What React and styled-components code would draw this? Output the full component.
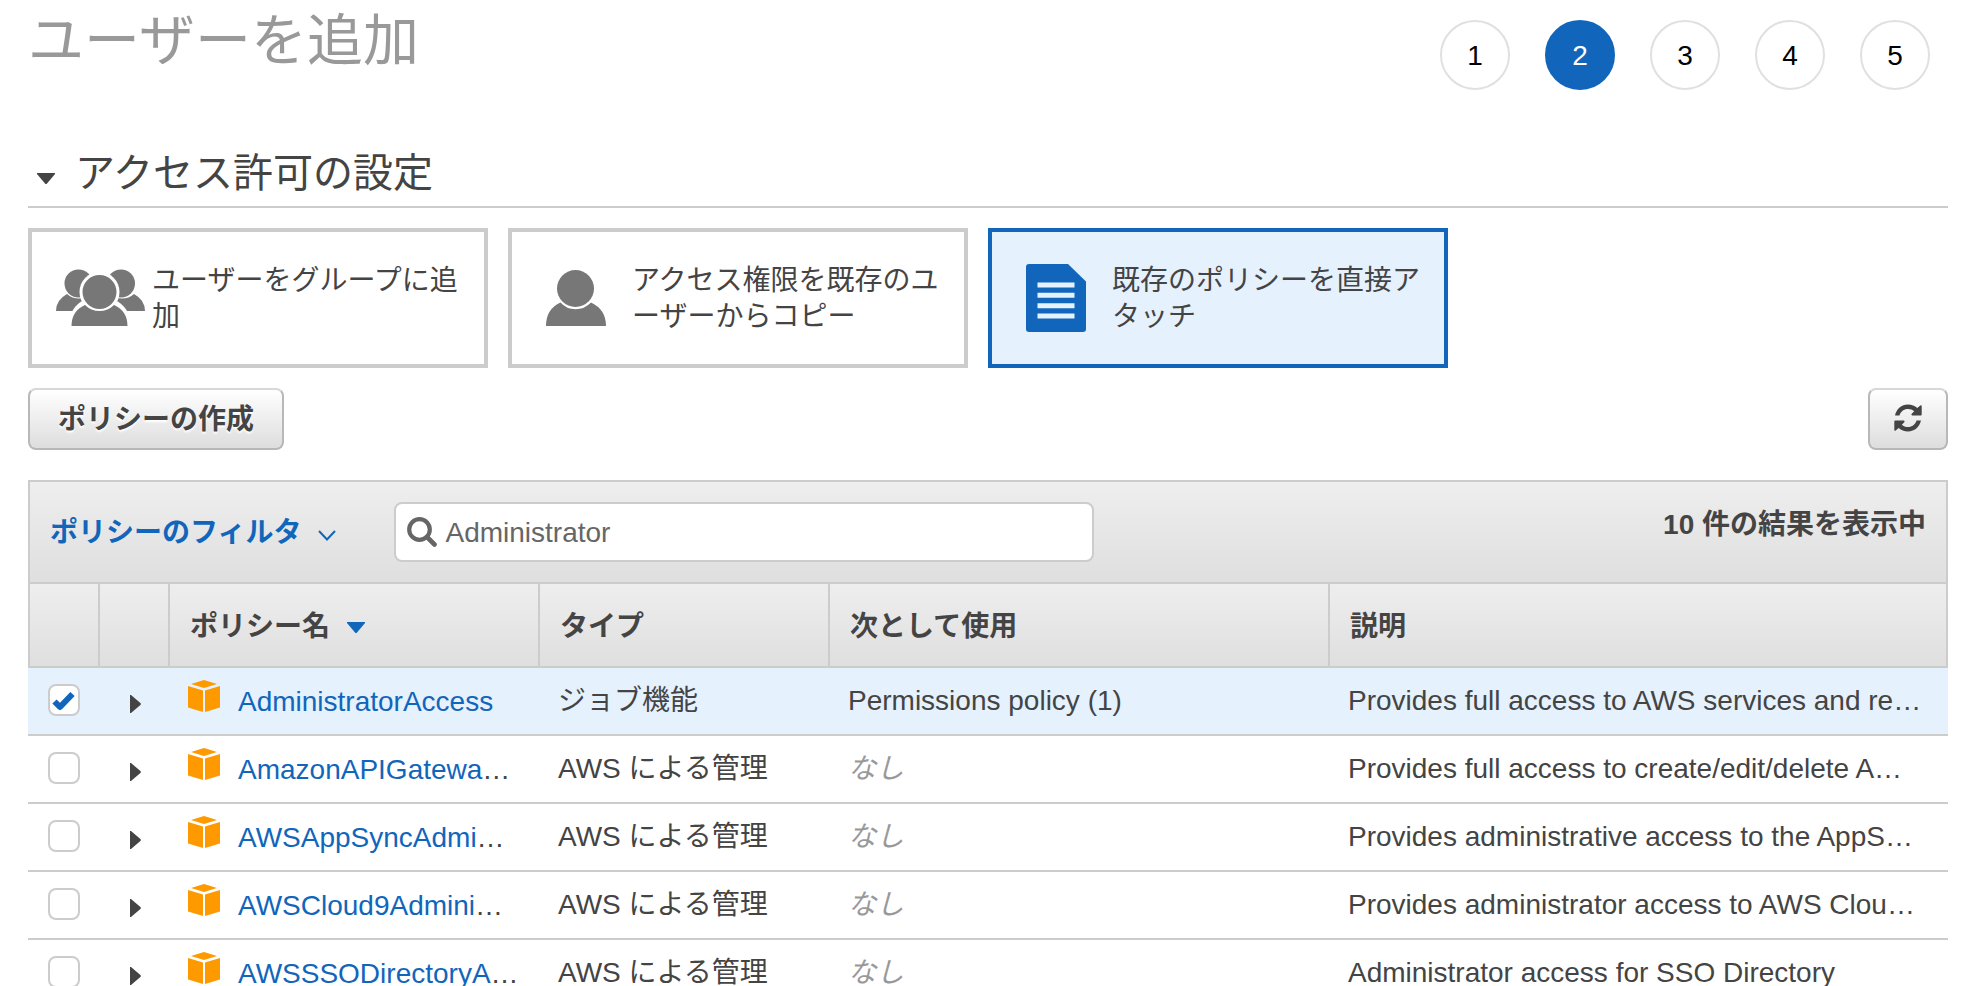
import React, { useState } from "react";
import styled, { createGlobalStyle, css } from "styled-components";

const color = {
  text: "#444",
  muted: "#999",
  line: "#ccc",
  blue: "#1166bb",
  paleBlue: "#e5f1fd",
  icon: "#777",
};

const GlobalStyle = createGlobalStyle`
  *, *::before, *::after { box-sizing: border-box; }
  body { margin: 0; background: #fff; }
  body, button, input {
    font-family: "Liberation Sans", "Noto Sans CJK JP", sans-serif;
    font-size: 28px;
    line-height: 36px;
    color: ${color.text};
  }
  svg { display: block; flex: none; }
`;

const Page = styled.main`
  padding: 0 28px;
`;

const Header = styled.header`
  display: flex;
  justify-content: space-between;
  align-items: flex-start;
  height: 140px;
`;

const Title = styled.h1`
  margin: 0;
  font-size: 56px;
  line-height: 82px;
  font-weight: 400;
  color: ${color.muted};
`;

const Steps = styled.ol`
  display: flex;
  gap: 35px;
  margin: 20px 18px 0 0;
  padding: 0;
  list-style: none;
`;

const Step = styled.li`
  display: flex;
  align-items: center;
  justify-content: center;
  width: 70px;
  height: 70px;
  padding-top: 2px;
  border: 2px solid ${(p) => (p.$current ? color.blue : "#e0e0e0")};
  border-radius: 50%;
  background: ${(p) => (p.$current ? color.blue : "#fff")};
  color: ${(p) => (p.$current ? "#fff" : "#000")};
`;

const SectionHeading = styled.h2`
  margin: 0 0 20px;
  border-bottom: 2px solid ${color.line};
  font-weight: 400;
`;

const SectionToggle = styled.button`
  display: flex;
  align-items: center;
  gap: 20px;
  height: 66px;
  padding: 0 0 0 9px;
  border: 0;
  background: none;
  font-size: 40px;
  line-height: 60px;

  svg { margin-top: 10px; }
`;

const Cards = styled.div`
  display: flex;
  gap: 20px;
`;

const Card = styled.button`
  display: flex;
  align-items: center;
  width: 460px;
  height: 140px;
  padding: 0 20px 0 24px;
  border: 4px solid ${(p) => (p.$selected ? color.blue : color.line)};
  background: ${(p) => (p.$selected ? color.paleBlue : "#fff")};
  color: ${color.text};
  text-align: left;
`;

const CardIcon = styled.span`
  flex: none;
  width: 96px;
  color: ${(p) => (p.$selected ? color.blue : color.icon)};
`;

const CardLabel = styled.span`
  flex: 1;
  padding-top: 2px;
  word-break: break-all;
`;

const Actions = styled.div`
  display: flex;
  justify-content: space-between;
  margin: 20px 0 30px;
`;

const Button = styled.button`
  display: flex;
  align-items: center;
  justify-content: center;
  min-width: 80px;
  height: 62px;
  padding: ${(p) => (p.$icon ? "0 0 2px" : "2px 28px 0")};
  border: 2px solid #b8b8b8;
  border-top-color: #d8d8d8;
  border-radius: 8px;
  background: linear-gradient(#fff, #ddd);
  font-weight: 700;
  text-shadow: 0 2px 2px #fff;
`;

const barFill = css`
  background: linear-gradient(#eee, #dfdfdf);
`;

const FilterBar = styled.div`
  display: flex;
  align-items: center;
  height: 102px;
  padding: 0 20px;
  border: 2px solid ${color.line};
  border-bottom: 0;
  ${barFill}
`;

const FilterButton = styled.button`
  display: flex;
  align-items: center;
  gap: 17px;
  margin-right: 58px;
  padding: 2px 0 0;
  border: 0;
  background: none;
  color: ${color.blue};
  font-weight: 700;

  svg { margin-top: 4px; }
`;

const SearchBox = styled.label`
  display: flex;
  align-items: center;
  gap: 8px;
  flex: 0 1 700px;
  height: 60px;
  padding: 0 11px;
  border: 2px solid ${color.line};
  border-radius: 8px;
  background: #fff;
  color: #666;
`;

const SearchInput = styled.input`
  flex: 1;
  min-width: 0;
  padding: 2px 0 0;
  border: 0;
  outline: 0;
  background: none;
  color: #666;
`;

const ResultCount = styled.p`
  margin: 0 0 14px auto;
  font-weight: 700;
`;

const Table = styled.table`
  width: 100%;
  table-layout: fixed;
  border-collapse: separate;
  border-spacing: 0;
`;

const Th = styled.th`
  height: 86px;
  padding: 4px 18px 0 20px;
  border: 2px solid ${color.line};
  border-left-width: ${(p) => (p.$first ? 2 : 0)}px;
  ${barFill}
  text-align: left;
  white-space: nowrap;
`;

const SortButton = styled.button`
  display: flex;
  align-items: center;
  gap: 17px;
  padding: 0;
  border: 0;
  background: none;
  font-weight: 700;
`;

const SortMark = styled.span`
  color: ${color.blue};
`;

const Row = styled.tr`
  background: ${(p) => (p.$selected ? color.paleBlue : "#fff")};
`;

const Td = styled.td`
  height: 68px;
  padding: 0 18px;
  border-bottom: 2px solid ${color.line};
  overflow: hidden;
  white-space: nowrap;
`;

const ControlTd = styled(Td)`
  padding: 0 0 2px 20px;
`;

const CheckBox = styled.input`
  appearance: none;
  display: block;
  width: 32px;
  height: 32px;
  margin: 0;
  border: 2px solid ${color.line};
  border-radius: 8px;
  background: #fff;

  &:checked {
    background: #fff
      url("data:image/svg+xml,%3Csvg xmlns='http://www.w3.org/2000/svg' viewBox='0 0 28 28'%3E%3Cpath d='M4.500 15.500l5.500 5.500L22.500 8' fill='none' stroke='%231166bb' stroke-width='6' stroke-linejoin='round'/%3E%3C/svg%3E")
      center / 28px 28px no-repeat;
  }
`;

const ExpandButton = styled.button`
  display: block;
  padding: 8px 10px 0;
  border: 0;
  background: none;
`;

const PolicyName = styled.div`
  display: flex;
  align-items: center;
  gap: 18px;
  padding-top: 2px;

  svg { margin-bottom: 12px; }
`;

const PolicyLink = styled.a`
  color: ${color.blue};
  text-decoration: none;
`;

const None = styled.i`
  color: ${color.muted};
`;

const CaretDown = () => (
  <svg width="18" height="11" viewBox="0 0 18 11" aria-hidden="true">
    <path d="M0 0h18v1l-8 9.400q-1 1-2 0L0 1z" fill="currentColor" />
  </svg>
);

const CaretRight = () => (
  <svg width="11" height="18" viewBox="0 0 11 18" aria-hidden="true">
    <path d="M0 0h1l9.400 8q1 1 0 2L1 18H0z" fill={color.text} />
  </svg>
);

const Chevron = () => (
  <svg width="18" height="11" viewBox="0 0 18 11" aria-hidden="true">
    <path d="M1 1l8 8.500L17 1" fill="none" stroke="currentColor" strokeWidth="2" />
  </svg>
);

const SearchIcon = () => (
  <svg width="30" height="30" viewBox="0 0 30 30" aria-hidden="true">
    <circle cx="12.500" cy="12.500" r="10.300" fill="none" stroke="currentColor" strokeWidth="4.200" />
    <path d="M20 20l7.500 7.500" stroke="currentColor" strokeWidth="4.600" strokeLinecap="round" />
  </svg>
);

const RefreshIcon = () => (
  <svg width="28" height="28" viewBox="0 0 28 28" fill={color.text} aria-hidden="true">
    <path d="M1 11.500C2.500 5 7.500.600 14 .600c3.800 0 6.800 1.300 9.300 3.500l3-2.600q1.400-.900 1.400.700V10.500q0 1-1 1h-8.500q-1.500-.500-.500-1.700l2.500-2.500C18.500 5.800 16.400 5 14 5c-4.200 0-7.300 2.500-8.500 6.500z" />
    <path d="M27 16.500C25.500 23 20.500 27.400 14 27.400c-3.800 0-6.800-1.300-9.300-3.500l-3 2.600q-1.400.900-1.400-.700V17.500q0-1 1-1h8.500q1.500.500.500 1.700L7.800 20.700c1.700 1.500 3.800 2.300 6.200 2.300 4.200 0 7.300-2.500 8.500-6.500z" />
  </svg>
);

const GroupIcon = () => (
  <svg width="90" height="58" viewBox="0 0 90 58" fill="currentColor" aria-hidden="true">
    <circle cx="22.500" cy="14.500" r="14" />
    <circle cx="65" cy="14.500" r="14" />
    <path d="M0 42q0-11 11-17 5 4.500 12 4.500 7 0 12-4.500L40 42z" />
    <path d="M89 42q0-11-11-17-5 4.500-12 4.500-7 0-12-4.500L49 42z" />
    <path d="M15.500 57q0-17 14-24 6 7 14 7t14-7q14.500 7 14.500 24z" stroke="#fff" strokeWidth="5" />
    <rect x="12" y="57" width="64" height="4" fill="#fff" />
    <circle cx="43.500" cy="23" r="20" fill="#fff" />
    <circle cx="43.500" cy="23" r="17" />
    <path d="M15.500 57q0-15 13.500-21 6 6 14.500 6t14.500-6q13.500 6 13.500 21z" />
  </svg>
);

const UserIcon = () => (
  <svg width="80" height="56" viewBox="0 0 80 56" fill="currentColor" aria-hidden="true">
    <circle cx="39.500" cy="18.500" r="18.500" />
    <path d="M10 56q0-17 14.500-23.500 6 6.800 15 6.800t15.500-6.800Q70 39.500 70 56z" />
  </svg>
);

const DocumentIcon = () => (
  <svg width="80" height="68" viewBox="0 0 80 68" aria-hidden="true">
    <path d="M13 0h39l18 17.500V65q0 3-3 3H13q-3 0-3-3V3q0-3 3-3z" fill="currentColor" />
    <path d="M21.500 18.500h37v5h-37zm0 10.300h37v5h-37zm0 10.400h37v5h-37zm0 10.400h37v5h-37z" fill={color.paleBlue} />
  </svg>
);

const PolicyIcon = () => (
  <svg width="32" height="32" viewBox="0 0 32 32" fill="#ff9900" aria-hidden="true">
    <path d="M3 4l13-4 13 4-13 4z" />
    <path d="M0 6l15 4.500V32L0 27.500z" />
    <path d="M32 6l-15 4.500V32l15-4.500z" />
  </svg>
);

const METHODS = [
  { label: "ユーザーをグループに追加", Icon: GroupIcon },
  { label: "アクセス権限を既存のユーザーからコピー", Icon: UserIcon },
  { label: "既存のポリシーを直接アタッチ", Icon: DocumentIcon },
];

const POLICIES = [
  { name: "AdministratorAccess", type: "ジョブ機能", usedAs: "Permissions policy (1)", description: "Provides full access to AWS services and re…" },
  { name: "AmazonAPIGatewa", cut: true, type: "AWS による管理", description: "Provides full access to create/edit/delete A…" },
  { name: "AWSAppSyncAdmi", cut: true, type: "AWS による管理", description: "Provides administrative access to the AppS…" },
  { name: "AWSCloud9Admini", cut: true, type: "AWS による管理", description: "Provides administrator access to AWS Clou…" },
  { name: "AWSSSODirectoryA", cut: true, type: "AWS による管理", description: "Administrator access for SSO Directory" },
];

export default function App() {
  const [method, setMethod] = useState(2);
  const [query, setQuery] = useState("Administrator");
  const [checked, setChecked] = useState({ AdministratorAccess: true });

  return (
    <Page lang="ja">
      <GlobalStyle />
      <Header>
        <Title>ユーザーを追加</Title>
        <Steps>
          {[1, 2, 3, 4, 5].map((n) => (
            <Step key={n} $current={n === 2} aria-current={n === 2 ? "step" : undefined}>
              {n}
            </Step>
          ))}
        </Steps>
      </Header>

      <SectionHeading>
        <SectionToggle type="button" aria-expanded="true">
          <CaretDown />
          アクセス許可の設定
        </SectionToggle>
      </SectionHeading>

      <Cards>
        {METHODS.map(({ label, Icon }, i) => (
          <Card key={label} type="button" $selected={i === method} aria-pressed={i === method} onClick={() => setMethod(i)}>
            <CardIcon $selected={i === method}>
              <Icon />
            </CardIcon>
            <CardLabel>{label}</CardLabel>
          </Card>
        ))}
      </Cards>

      <Actions>
        <Button type="button">ポリシーの作成</Button>
        <Button type="button" $icon aria-label="更新">
          <RefreshIcon />
        </Button>
      </Actions>

      <FilterBar>
        <FilterButton type="button">
          ポリシーのフィルタ
          <Chevron />
        </FilterButton>
        <SearchBox>
          <SearchIcon />
          <SearchInput type="text" aria-label="検索" value={query} onChange={(e) => setQuery(e.target.value)} />
        </SearchBox>
        <ResultCount>10 件の結果を表示中</ResultCount>
      </FilterBar>

      <Table>
        <colgroup>
          <col width="72" />
          <col width="70" />
          <col width="370" />
          <col width="290" />
          <col width="500" />
          <col />
        </colgroup>
        <thead>
          <tr>
            <Th $first />
            <Th />
            <Th scope="col">
              <SortButton type="button">
                ポリシー名
                <SortMark>
                  <CaretDown />
                </SortMark>
              </SortButton>
            </Th>
            <Th scope="col">タイプ</Th>
            <Th scope="col">次として使用</Th>
            <Th scope="col">説明</Th>
          </tr>
        </thead>
        <tbody>
          {POLICIES.map((p) => (
            <Row key={p.name} $selected={!!checked[p.name]}>
              <ControlTd>
                <CheckBox
                  type="checkbox"
                  aria-label={p.name}
                  checked={!!checked[p.name]}
                  onChange={(e) => setChecked({ ...checked, [p.name]: e.target.checked })}
                />
              </ControlTd>
              <ControlTd>
                <ExpandButton type="button" aria-label="詳細">
                  <CaretRight />
                </ExpandButton>
              </ControlTd>
              <Td>
                <PolicyName>
                  <PolicyIcon />
                  <span>
                    <PolicyLink href="#policy">{p.name}</PolicyLink>
                    {p.cut && "…"}
                  </span>
                </PolicyName>
              </Td>
              <Td>{p.type}</Td>
              <Td>{p.usedAs || <None>なし</None>}</Td>
              <Td>{p.description}</Td>
            </Row>
          ))}
        </tbody>
      </Table>
    </Page>
  );
}
